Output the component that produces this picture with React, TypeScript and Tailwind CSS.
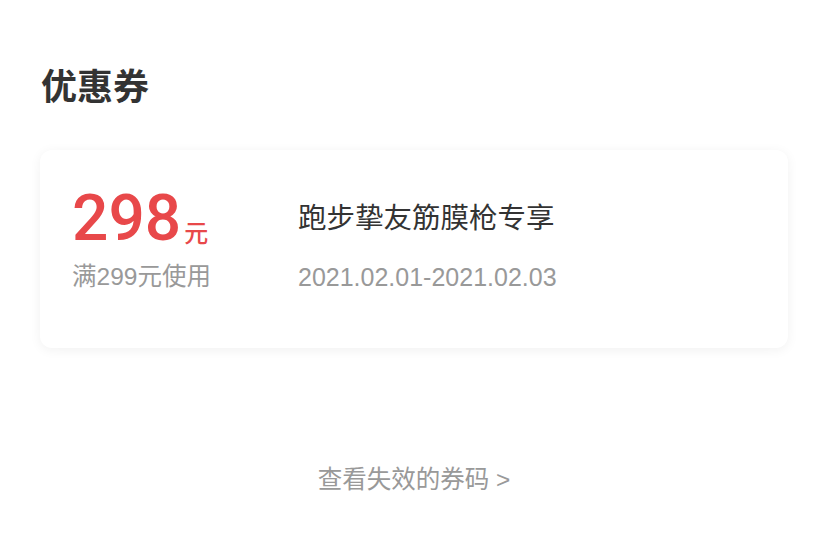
export default function App() {
  const font = { fontFamily: '"Liberation Sans", "Noto Sans CJK SC", sans-serif' };
  const num = { fontFamily: 'Roboto, "Liberation Sans", sans-serif' };
  return (
    <div className="w-[828px] h-[533px] bg-white text-[#333]" style={font}>
      <div className="px-[40px] pt-[66px]">
        <h1 className="text-[36px] leading-[44px] font-bold text-[#333] pl-[1px]">优惠券</h1>
        <div className="mt-[40px] h-[198px] rounded-[12px] bg-white shadow-[0_2px_12px_rgba(0,0,0,0.06)] flex items-start">
          <div className="w-[258px] pl-[32px] pt-[37px]">
            <div className="flex items-end text-[#e8484a]">
              <span className="text-[64px] leading-[64px] font-medium" style={num}>298</span>
              <span className="text-[24px] leading-[28px] ml-[3px] mb-[3px] font-medium">元</span>
            </div>
            <div className="mt-[11px] text-[24.5px] leading-[30px] text-[#999]">满299元使用</div>
          </div>
          <div className="pt-[50px]">
            <div className="text-[28.5px] leading-[36px] text-[#333]">跑步挚友筋膜枪专享</div>
            <div className="mt-[26px] text-[25px] leading-[30px] text-[#999]">2021.02.01-2021.02.03</div>
          </div>
        </div>
      </div>
      <div className="mt-[116px] text-center text-[24.5px] leading-[32px] text-[#999]">查看失效的券码 &gt;</div>
    </div>
  );
}
